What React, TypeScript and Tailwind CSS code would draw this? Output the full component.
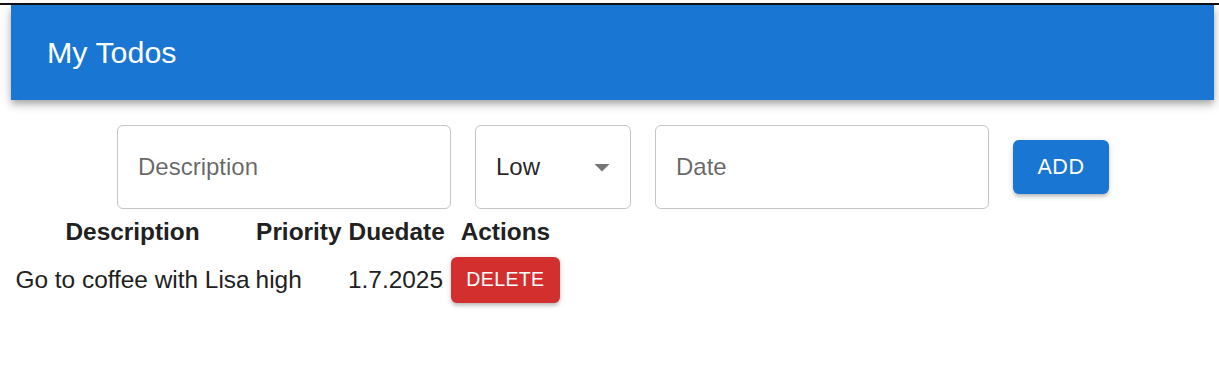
import React from 'react';

type Todo = {
  description: string;
  priority: string;
  duedate: string;
};

const todos: Todo[] = [
  { description: 'Go to coffee with Lisa', priority: 'high', duedate: '1.7.2025' },
];

function Field({ label, width }: { label: string; width: string }) {
  return (
    <div
      className={`${width} h-[84px] shrink-0 rounded-[6px] border border-[rgba(0,0,0,0.23)] flex items-center pl-[20px] pr-[21px] text-[24px] text-[rgba(0,0,0,0.6)]`}
    >
      {label}
    </div>
  );
}

export default function App() {
  return (
    <div className="min-h-screen bg-white text-[#212121]" style={{ fontFamily: '"Liberation Sans", Arial, sans-serif' }}>
      <div className="h-[3px]" />
      <div className="h-[2px] bg-[#111]" />

      {/* App bar */}
      <div className="ml-[11px] mr-[5px] h-[95px] bg-[#1976d2] flex items-center pl-[36px] shadow-[0_3px_6px_-1px_rgba(0,0,0,0.2),0_6px_7.5px_0_rgba(0,0,0,0.14),0_1.5px_15px_0_rgba(0,0,0,0.12)]">
        <h1 className="text-[30.4px] text-white leading-none">My Todos</h1>
      </div>

      {/* Add form */}
      <div className="mt-[25px] pl-[117px] flex items-center gap-[24px]">
        <Field label="Description" width="w-[334px]" />
        <div className="w-[156px] h-[84px] shrink-0 rounded-[6px] border border-[rgba(0,0,0,0.23)] flex items-center justify-between pl-[20px] pr-[10px] text-[24px] text-[rgba(0,0,0,0.87)]">
          <span>Low</span>
          <svg viewBox="0 0 24 24" className="w-[36px] h-[36px] fill-[rgba(0,0,0,0.54)]">
            <path d="M7 10l5 5 5-5z" />
          </svg>
        </div>
        <Field label="Date" width="w-[334px]" />
        <button className="min-w-[96px] h-[54px] px-[24px] rounded-[6px] bg-[#1976d2] text-white text-[21.5px] uppercase tracking-[0.6px] shadow-[0_3px_1.5px_-3px_rgba(0,0,0,0.2),0_3px_3px_0_rgba(0,0,0,0.14),0_1.5px_7.5px_0_rgba(0,0,0,0.12)]">
          Add
        </button>
      </div>

      {/* Todo table */}
      <table className="ml-[11px] border-separate border-spacing-[3px] text-[24.4px]">
        <thead>
          <tr>
            <th className="p-[2px] font-bold text-center">Description</th>
            <th className="p-[2px] font-bold text-center">Priority</th>
            <th className="p-[2px] font-bold text-center">Duedate</th>
            <th className="p-[2px] font-bold text-center">Actions</th>
          </tr>
        </thead>
        <tbody>
          {todos.map((todo, i) => (
            <tr key={i}>
              <td className="p-[1.5px] text-left">{todo.description}</td>
              <td className="p-[1.5px] text-left">{todo.priority}</td>
              <td className="p-[1.5px] text-left">{todo.duedate}</td>
              <td className="p-[1.5px] text-left">
                <button className="h-[46px] px-[15px] rounded-[6px] bg-[#d32f2f] text-white text-[19.5px] uppercase tracking-[0.4px] shadow-[0_3px_1.5px_-3px_rgba(0,0,0,0.2),0_3px_3px_0_rgba(0,0,0,0.14),0_1.5px_7.5px_0_rgba(0,0,0,0.12)]">
                  Delete
                </button>
              </td>
            </tr>
          ))}
        </tbody>
      </table>
    </div>
  );
}
